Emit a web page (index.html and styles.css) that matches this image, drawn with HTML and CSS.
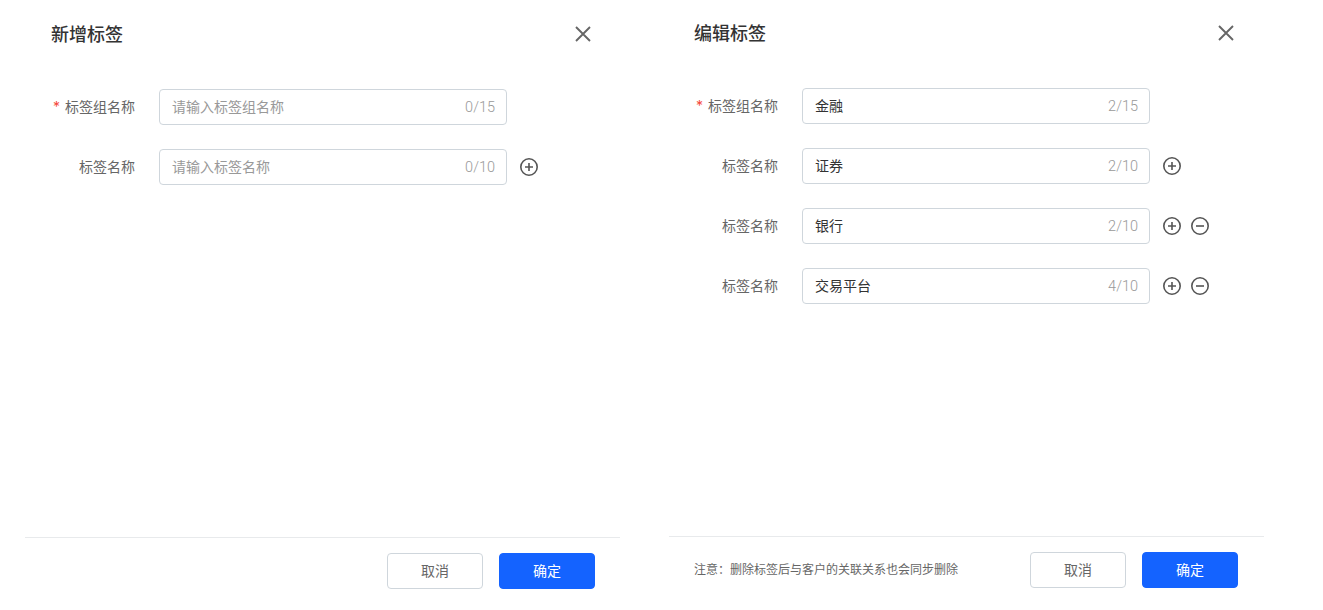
FILE: index.html
```html
<!DOCTYPE html>
<html lang="zh-CN">
<head>
<meta charset="utf-8">
<title>标签</title>
<link rel="stylesheet" href="styles.css">
</head>
<body>
<svg class="defs" width="0" height="0" aria-hidden="true">
  <symbol id="plus" viewBox="0 0 20 20"><circle cx="10" cy="10" r="8.2" fill="none" stroke="currentColor" stroke-width="1.6"/><path d="M6 10h8M10 6v8" fill="none" stroke="currentColor" stroke-width="1.6"/></symbol>
  <symbol id="minus" viewBox="0 0 20 20"><circle cx="10" cy="10" r="8.2" fill="none" stroke="currentColor" stroke-width="1.6"/><path d="M6 10h8" fill="none" stroke="currentColor" stroke-width="1.6"/></symbol>
  <symbol id="close" viewBox="0 0 16 16"><path d="M1 1l14 14M15 1L1 15" fill="none" stroke="currentColor" stroke-width="1.9"/></symbol>
</svg>
<main class="page">
  <section class="dialog dialog-add">
    <header class="head">
      <h2 class="title">新增标签</h2>
      <svg class="close"><use href="#close"/></svg>
    </header>
    <div class="form">
      <div class="row">
        <label class="label"><span class="star">*</span>标签组名称</label>
        <div class="field"><span class="value placeholder">请输入标签组名称</span><span class="count">0/15</span></div>
      </div>
      <div class="row">
        <label class="label">标签名称</label>
        <div class="field"><span class="value placeholder">请输入标签名称</span><span class="count">0/10</span></div>
        <div class="actions"><svg class="icon"><use href="#plus"/></svg></div>
      </div>
    </div>
    <footer class="foot">
      <div class="buttons">
        <button class="btn btn-cancel">取消</button>
        <button class="btn btn-ok">确定</button>
      </div>
    </footer>
  </section>

  <section class="dialog dialog-edit">
    <header class="head">
      <h2 class="title">编辑标签</h2>
      <svg class="close"><use href="#close"/></svg>
    </header>
    <div class="form">
      <div class="row">
        <label class="label"><span class="star">*</span>标签组名称</label>
        <div class="field"><span class="value">金融</span><span class="count">2/15</span></div>
      </div>
      <div class="row">
        <label class="label">标签名称</label>
        <div class="field"><span class="value">证券</span><span class="count">2/10</span></div>
        <div class="actions"><svg class="icon"><use href="#plus"/></svg></div>
      </div>
      <div class="row">
        <label class="label">标签名称</label>
        <div class="field"><span class="value">银行</span><span class="count">2/10</span></div>
        <div class="actions"><svg class="icon"><use href="#plus"/></svg><svg class="icon"><use href="#minus"/></svg></div>
      </div>
      <div class="row">
        <label class="label">标签名称</label>
        <div class="field"><span class="value">交易平台</span><span class="count">4/10</span></div>
        <div class="actions"><svg class="icon"><use href="#plus"/></svg><svg class="icon"><use href="#minus"/></svg></div>
      </div>
    </div>
    <footer class="foot">
      <p class="note">注意：删除标签后与客户的关联关系也会同步删除</p>
      <div class="buttons">
        <button class="btn btn-cancel">取消</button>
        <button class="btn btn-ok">确定</button>
      </div>
    </footer>
  </section>
</main>
</body>
</html>
```
FILE: styles.css
```css
* { box-sizing: border-box; }
html, body { margin: 0; height: 100%; background: #fff; }
body {
  font-family: "Inter", "Noto Sans CJK SC", "Noto Sans", sans-serif;
  font-size: 14px;
  color: #333;
  overflow: hidden;
}
.defs { display: block; height: 0; }
.page { display: flex; gap: 48px; padding-left: 25px; height: 610px; }
.dialog { width: 595px; height: 589px; display: flex; flex-direction: column; }
.dialog-add { margin-top: 1px; }
.dialog-edit { width: 596px; }
.dialog-edit .head { padding-right: 30px; }
.dialog-edit .foot { margin-left: 1px; padding-left: 25px; padding-right: 26px; }
.head {
  height: 66px;
  padding: 0 29px 0 26px;
  display: flex;
  align-items: center;
  justify-content: space-between;
}
.title { margin: 2px 0 0; font-size: 18px; font-weight: 500; line-height: 24px; color: #333; }
.close { width: 16px; height: 16px; color: #666; }
.form { flex: 1; padding-top: 22px; display: flex; flex-direction: column; gap: 24px; }
.row { display: flex; align-items: center; height: 36px; }
.label { width: 110px; text-align: right; color: #666; line-height: 20px; }
.star { color: #f5483b; margin-right: 5px; }
.field {
  width: 348px;
  height: 36px;
  margin-left: 24px;
  padding: 0 11px 2px 12px;
  border: 1px solid #cfd6dc;
  border-radius: 4px;
  display: flex;
  align-items: center;
  justify-content: space-between;
}
.value { color: #333; }
.placeholder { color: #999; }
.count { color: #999; font-family: "Roboto", sans-serif; font-weight: 300; font-size: 14.5px; margin-top: 2px; }
.actions { display: flex; gap: 8px; margin-left: 12px; }
.icon { width: 20px; height: 20px; color: #555; display: block; }
.foot {
  height: 53px;
  border-top: 1px solid #e8eaec;
  padding: 15px 25px 0 26px;
  display: flex;
  justify-content: space-between;
  align-items: flex-start;
  flex-shrink: 0;
}
.note { margin: 0; font-size: 12px; line-height: 36px; color: #666; }
.buttons { display: flex; gap: 16px; margin-left: auto; }
.btn {
  width: 96px;
  height: 36px;
  padding: 0 0 2px;
  border-radius: 4px;
  font: inherit;
  cursor: pointer;
}
.btn-cancel { background: #fff; border: 1px solid #cfd6dc; color: #666; }
.btn-ok { background: #1463ff; border: 1px solid #1463ff; color: #fff; }
```
